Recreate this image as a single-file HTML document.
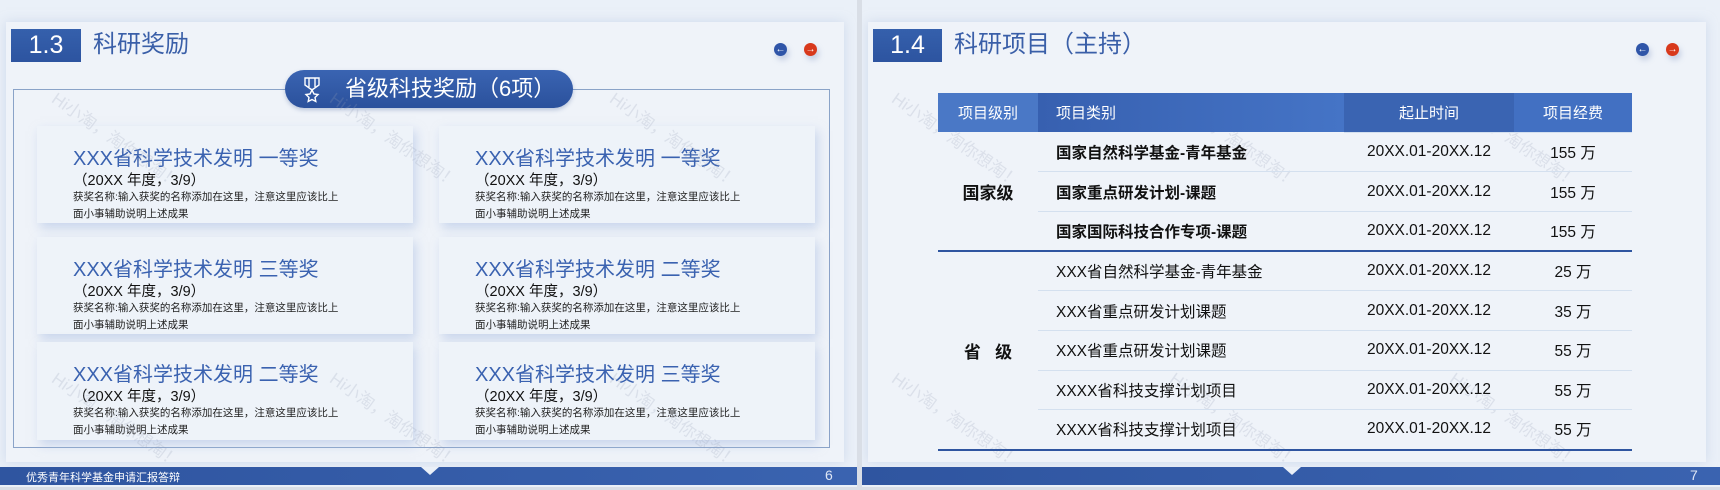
<!DOCTYPE html>
<html><head><meta charset="utf-8"><style>
*{margin:0;padding:0;box-sizing:border-box}
body{width:1720px;height:490px;background:#d9dee6;position:relative;overflow:hidden;font-family:"Liberation Sans","Noto Sans CJK SC",sans-serif}
.slide{position:absolute;top:0;width:857px;height:487px;background:#eaf0f8;overflow:hidden}
.panel{position:absolute;left:6px;top:22px;width:838px;height:440px;background:#eff3f9;box-shadow:0 0 10px rgba(180,195,225,.5)}
.num{position:absolute;top:29px;height:33px;background:linear-gradient(#3560ac,#2d54a0);color:#fff;font-size:25px;line-height:33px;text-align:center}
.ttl{position:absolute;top:28px;color:#3a5fa8;font-size:24px;line-height:34px}
.arr{position:absolute;top:43px;width:13px;height:13px;border-radius:50%;color:#fff;font-size:10px;line-height:13px;text-align:center;box-shadow:2px 4px 6px rgba(120,140,190,.35)}
.foot{position:absolute;left:0;top:467px;width:857px;height:18px;background:linear-gradient(90deg,#2f55a0,#3a63b0)}
.foot .t{position:absolute;left:26px;top:2px;color:#fff;font-size:11px}
.foot .p{position:absolute;top:0;color:#dfe6f5;font-size:14px}
.notch{position:absolute;top:467px;left:421px;width:0;height:0;border-left:9px solid transparent;border-right:9px solid transparent;border-top:8px solid #eaf0f8}
.frame{position:absolute;left:13px;top:89px;width:817px;height:359px;border:1px solid #8aa3c8}
.pill{position:absolute;left:285px;top:70px;width:288px;height:38px;border-radius:19px;background:linear-gradient(#3a64b2,#2b519c);color:#fff;font-size:22px;line-height:38px;padding-left:60px;box-shadow:0 2px 4px rgba(60,90,150,.3)}
.card{position:absolute;width:376px;background:#eef3f9;box-shadow:3px 5px 10px rgba(170,190,225,.55)}
.card .h{position:absolute;left:36px;top:16px;color:#3a62b0;font-size:20px;white-space:nowrap}
.card .s{position:absolute;left:36px;top:43px;color:#111;font-size:14.5px;white-space:nowrap}
.card .d{position:absolute;left:36px;top:63px;color:#222;font-size:10.5px;line-height:17px;width:274px}
.wm{position:absolute;color:rgba(150,160,180,.22);font-size:17px;transform:rotate(35deg);transform-origin:left top;white-space:nowrap}
table{position:absolute;left:938px;top:93px;width:694px;border-collapse:collapse}
th{height:39px;color:#fff;font-weight:normal;font-size:15px}
td{height:39.7px;font-size:15.5px;color:#111;border-top:1px solid #d4e0ef}
td.l{border-top:none;text-align:center;font-size:17px;font-weight:bold}
.c{text-align:center}
</style></head><body>
<div class="slide" style="left:0">
<div class="panel"></div>
<div class="num" style="left:11px;width:70px">1.3</div>
<div class="ttl" style="left:93px">科研奖励</div>
<div class="arr" style="left:774px;background:#2f55a8">←</div>
<div class="arr" style="left:804px;background:#d8391c">→</div>
<div class="frame"></div>
<div class="pill"><svg style="position:absolute;left:17px;top:7px" width="20" height="26" viewBox="0 0 20 26" fill="none" stroke="#fff" stroke-width="1.4"><path d="M3 1h14v7l-7 5-7-5z M7 1v9 M13 1v9"/><path d="M10 13l2 4 4 .5-3 3 .8 4-3.8-2-3.8 2 .8-4-3-3 4-.5z"/></svg>省级科技奖励（6项）</div>
<div class="card" style="left:37px;top:126px;height:97px"><div class="h">XXX省科学技术发明 一等奖</div><div class="s">（20XX 年度，3/9）</div><div class="d">获奖名称:输入获奖的名称添加在这里，注意这里应该比上面小事辅助说明上述成果</div></div>
<div class="card" style="left:439px;top:126px;height:97px"><div class="h">XXX省科学技术发明 一等奖</div><div class="s">（20XX 年度，3/9）</div><div class="d">获奖名称:输入获奖的名称添加在这里，注意这里应该比上面小事辅助说明上述成果</div></div>
<div class="card" style="left:37px;top:237px;height:97px"><div class="h">XXX省科学技术发明 三等奖</div><div class="s">（20XX 年度，3/9）</div><div class="d">获奖名称:输入获奖的名称添加在这里，注意这里应该比上面小事辅助说明上述成果</div></div>
<div class="card" style="left:439px;top:237px;height:97px"><div class="h">XXX省科学技术发明 二等奖</div><div class="s">（20XX 年度，3/9）</div><div class="d">获奖名称:输入获奖的名称添加在这里，注意这里应该比上面小事辅助说明上述成果</div></div>
<div class="card" style="left:37px;top:342px;height:98px"><div class="h">XXX省科学技术发明 二等奖</div><div class="s">（20XX 年度，3/9）</div><div class="d">获奖名称:输入获奖的名称添加在这里，注意这里应该比上面小事辅助说明上述成果</div></div>
<div class="card" style="left:439px;top:342px;height:98px"><div class="h">XXX省科学技术发明 三等奖</div><div class="s">（20XX 年度，3/9）</div><div class="d">获奖名称:输入获奖的名称添加在这里，注意这里应该比上面小事辅助说明上述成果</div></div>
<div class="wm" style="left:62px;top:85px">Hi小淘，淘你想淘！</div>
<div class="wm" style="left:340px;top:85px">Hi小淘，淘你想淘！</div>
<div class="wm" style="left:620px;top:85px">Hi小淘，淘你想淘！</div>
<div class="wm" style="left:62px;top:365px">Hi小淘，淘你想淘！</div>
<div class="wm" style="left:340px;top:365px">Hi小淘，淘你想淘！</div>
<div class="wm" style="left:620px;top:365px">Hi小淘，淘你想淘！</div>
<div class="foot"><span class="t">优秀青年科学基金申请汇报答辩</span><span class="p" style="left:825px">6</span></div>
<div class="notch"></div>
</div>
<div class="slide" style="left:862px;width:858px">
<div class="panel"></div>
<div class="num" style="left:11px;width:69px">1.4</div>
<div class="ttl" style="left:92px">科研项目（主持）</div>
<div class="arr" style="left:774px;background:#2f55a8">←</div>
<div class="arr" style="left:804px;background:#d8391c">→</div>
<div class="wm" style="left:40px;top:85px">Hi小淘，淘你想淘！</div>
<div class="wm" style="left:318px;top:85px">Hi小淘，淘你想淘！</div>
<div class="wm" style="left:598px;top:85px">Hi小淘，淘你想淘！</div>
<div class="wm" style="left:40px;top:365px">Hi小淘，淘你想淘！</div>
<div class="wm" style="left:318px;top:365px">Hi小淘，淘你想淘！</div>
<div class="wm" style="left:598px;top:365px">Hi小淘，淘你想淘！</div>
<div class="foot" style="width:858px"><span class="p" style="left:828px">7</span></div>
<div class="notch"></div>
</div>
<table>
<tr><th style="width:100px;background:#4a78c6">项目级别</th><th style="width:306px;text-align:left;padding-left:18px;background:linear-gradient(90deg,#3760b0,#4574c6)">项目类别</th><th style="width:170px;background:#3a64b2">起止时间</th><th style="background:#4270c2">项目经费</th></tr>
<tr><td class="l" rowspan="3" style="border-bottom:2px solid #2f55a0">国家级</td><td style="border-top:none;padding-left:18px;font-weight:bold">国家自然科学基金-青年基金</td><td class="c">20XX.01-20XX.12</td><td class="c">155 万</td></tr>
<tr><td style="padding-left:18px;font-weight:bold">国家重点研发计划-课题</td><td class="c">20XX.01-20XX.12</td><td class="c">155 万</td></tr>
<tr style="border-bottom:2px solid #2f55a0"><td style="padding-left:18px;font-weight:bold">国家国际科技合作专项-课题</td><td class="c">20XX.01-20XX.12</td><td class="c">155 万</td></tr>
<tr><td class="l" rowspan="5" style="border-bottom:2px solid #2f55a0">省&nbsp;&nbsp;&nbsp;级</td><td style="border-top:none;padding-left:18px">XXX省自然科学基金-青年基金</td><td class="c" style="border-top:none">20XX.01-20XX.12</td><td class="c" style="border-top:none">25 万</td></tr>
<tr><td style="padding-left:18px">XXX省重点研发计划课题</td><td class="c">20XX.01-20XX.12</td><td class="c">35 万</td></tr>
<tr><td style="padding-left:18px">XXX省重点研发计划课题</td><td class="c">20XX.01-20XX.12</td><td class="c">55 万</td></tr>
<tr><td style="padding-left:18px">XXXX省科技支撑计划项目</td><td class="c">20XX.01-20XX.12</td><td class="c">55 万</td></tr>
<tr style="border-bottom:2px solid #2f55a0"><td style="padding-left:18px">XXXX省科技支撑计划项目</td><td class="c">20XX.01-20XX.12</td><td class="c">55 万</td></tr>
</table>
</body></html>
